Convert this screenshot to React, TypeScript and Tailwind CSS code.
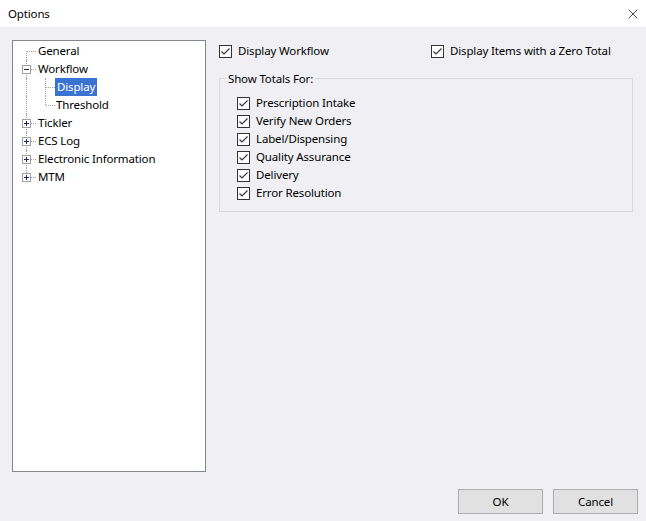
import { X } from 'lucide-react';

const font = { fontFamily: '"Segoe UI", "Noto Sans", "Liberation Sans", sans-serif' };

const CheckBox = ({ label }: { label: string }) => (
  <label className="flex h-[18px] items-center gap-[6px] text-[11.5px] tracking-[-0.15px] text-black">
    <span className="flex size-[13px] shrink-0 items-center justify-center border border-[#333333] bg-white">
      <svg width="11" height="11" viewBox="0 0 11 11" aria-hidden>
        <polyline points="1.5,5.5 4,8 9.5,2.5" fill="none" stroke="#333333" strokeWidth="1.1" />
      </svg>
    </span>
    <span>{label}</span>
  </label>
);

const Expander = ({ open }: { open: boolean }) => (
  <span className="absolute left-[9px] top-[5px] flex size-[9px] items-center justify-center border border-[#a0a0a0] bg-white">
    <svg width="7" height="7" viewBox="0 0 7 7" aria-hidden>
      <line x1="1" y1="3.5" x2="6" y2="3.5" stroke="#1c2a5a" strokeWidth="1" />
      {!open && <line x1="3.5" y1="1" x2="3.5" y2="6" stroke="#1c2a5a" strokeWidth="1" />}
    </svg>
  </span>
);

type Row = {
  label: string;
  level: 0 | 1;
  expander?: 'plus' | 'minus';
  main: 'full' | 'bottom' | 'top';
  sub?: 'full' | 'top';
  selected?: boolean;
};

const rows: Row[] = [
  { label: 'General', level: 0, main: 'bottom' },
  { label: 'Workflow', level: 0, expander: 'minus', main: 'full' },
  { label: 'Display', level: 1, main: 'full', sub: 'full', selected: true },
  { label: 'Threshold', level: 1, main: 'full', sub: 'top' },
  { label: 'Tickler', level: 0, expander: 'plus', main: 'full' },
  { label: 'ECS Log', level: 0, expander: 'plus', main: 'full' },
  { label: 'Electronic Information', level: 0, expander: 'plus', main: 'full' },
  { label: 'MTM', level: 0, expander: 'plus', main: 'top' },
];

const TreeRow = ({ row }: { row: Row }) => {
  const mainCls =
    row.main === 'full' ? 'top-0 h-[18px]' : row.main === 'bottom' ? 'top-[9px] h-[9px]' : 'top-0 h-[9px]';
  return (
    <div className="flex h-[18px] items-center">
      <div className={`relative h-[18px] shrink-0 ${row.level === 0 ? 'w-[24px]' : 'w-[42px]'}`}>
        <span className={`absolute left-[13px] border-l border-dotted border-[#a0a0a0] ${mainCls}`} />
        {row.level === 0 && (
          <span className="absolute left-[14px] top-[9px] w-[9px] border-t border-dotted border-[#a0a0a0]" />
        )}
        {row.level === 1 && (
          <>
            <span
              className={`absolute left-[32px] top-0 border-l border-dotted border-[#a0a0a0] ${row.sub === 'full' ? 'h-[18px]' : 'h-[9px]'}`}
            />
            <span className="absolute left-[33px] top-[9px] w-[9px] border-t border-dotted border-[#a0a0a0]" />
          </>
        )}
        {row.expander && <Expander open={row.expander === 'minus'} />}
      </div>
      <span
        className={`flex h-[18px] items-center text-[11.5px] tracking-[-0.15px] ${row.selected ? 'bg-[#3b73d3] px-[2px] text-white' : 'px-[1px] text-black'}`}
      >
        {row.label}
      </span>
    </div>
  );
};

export default function App() {
  return (
    <div className="flex h-[521px] w-[646px] flex-col bg-[#f0f0f4]" style={font}>
      <div className="flex h-[27px] shrink-0 items-center justify-between bg-white pl-[8px] pr-[5px]">
        <span className="text-[11.5px] tracking-[-0.15px] text-black">Options</span>
        <X size={16} strokeWidth={1.1} className="text-black" />
      </div>

      <div className="flex flex-1 flex-col px-[12px] pt-[13px]">
        <div className="flex h-[432px] gap-[13px]">
          <div className="w-[194px] shrink-0 border border-[#828790] bg-white pt-[1px]">
            {rows.map(r => (
              <TreeRow key={r.label} row={r} />
            ))}
          </div>

          <div className="flex w-[414px] flex-col">
            <div className="mt-[2px] flex">
              <div className="w-[212px]">
                <CheckBox label="Display Workflow" />
              </div>
              <CheckBox label="Display Items with a Zero Total" />
            </div>

            <div className="relative mt-[18px] h-[134px] border border-[#d9d9dd] pl-[17px] pt-[15px]">
              <span className="absolute left-[6px] top-[-9px] bg-[#f0f0f4] px-[2px] text-[11.5px] tracking-[-0.15px] text-black">
                Show Totals For:
              </span>
              <CheckBox label="Prescription Intake" />
              <CheckBox label="Verify New Orders" />
              <CheckBox label="Label/Dispensing" />
              <CheckBox label="Quality Assurance" />
              <CheckBox label="Delivery" />
              <CheckBox label="Error Resolution" />
            </div>
          </div>
        </div>

        <div className="mr-[-4px] flex justify-end gap-[10px] pt-[17px]">
          <button className="h-[25px] w-[85px] border border-[#adadad] bg-[#e1e1e1] text-[11.5px] tracking-[-0.15px] text-black">
            OK
          </button>
          <button className="h-[25px] w-[85px] border border-[#adadad] bg-[#e1e1e1] text-[11.5px] tracking-[-0.15px] text-black">
            Cancel
          </button>
        </div>
      </div>
    </div>
  );
}
